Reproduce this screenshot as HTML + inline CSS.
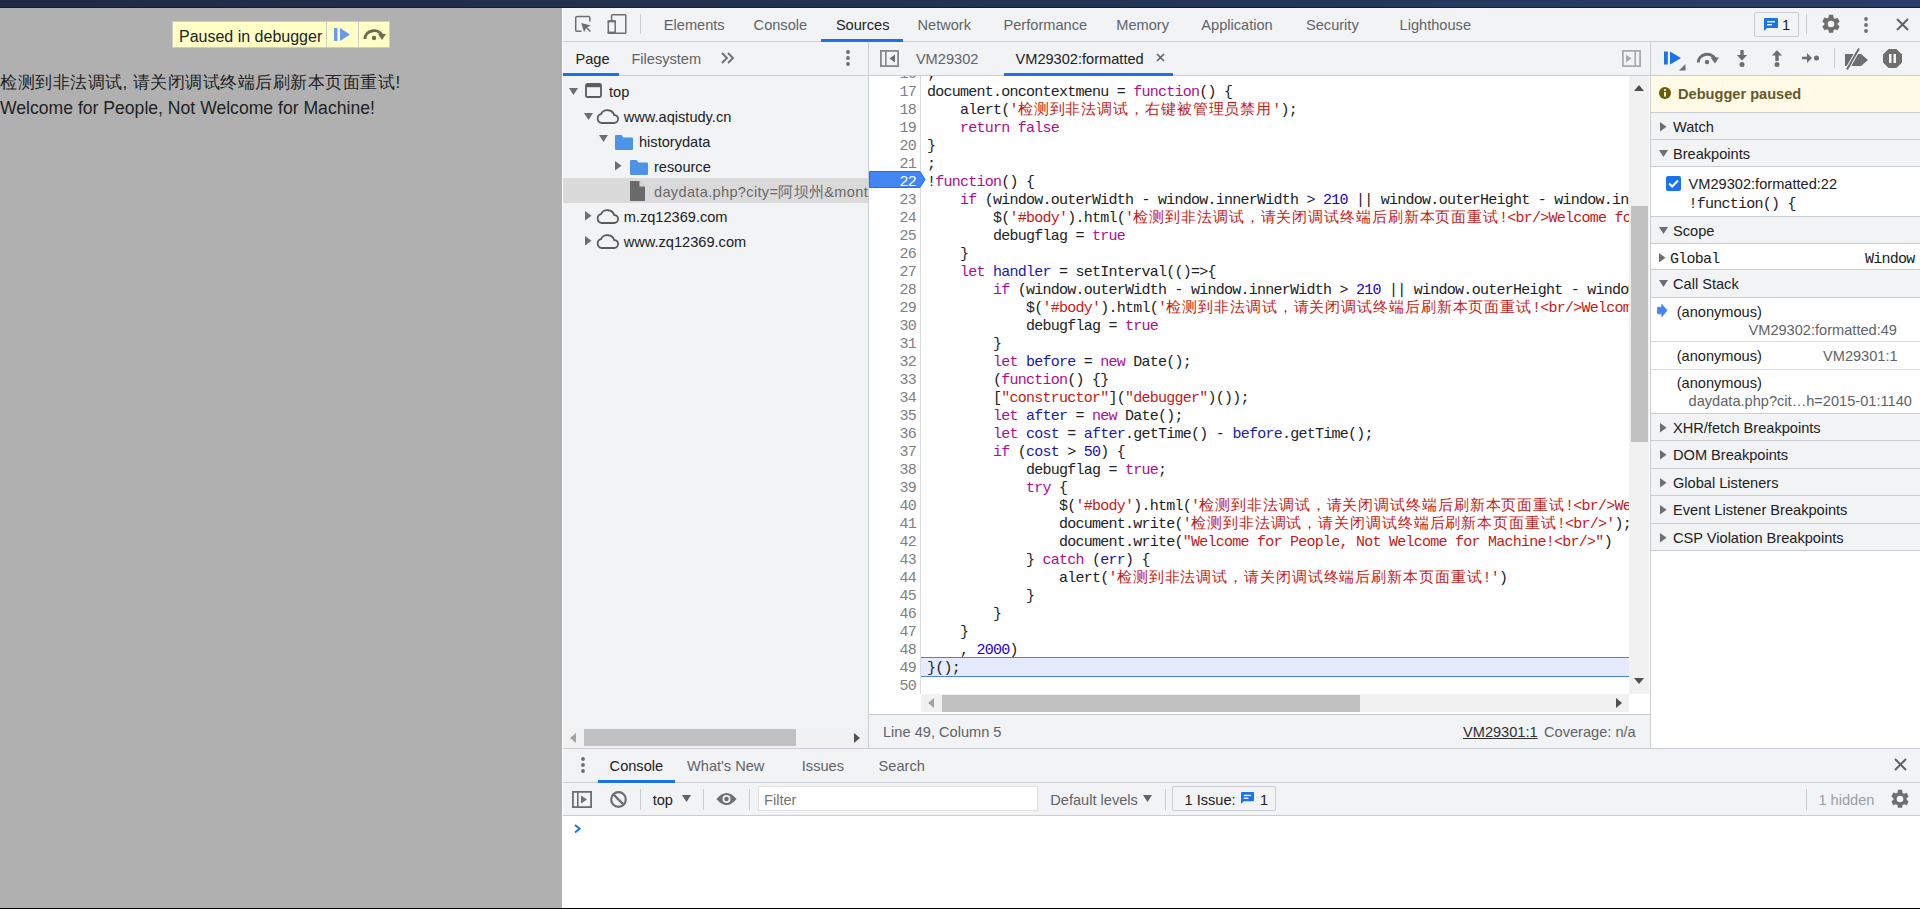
<!DOCTYPE html><html><head><meta charset="utf-8"><style>
*{margin:0;padding:0;box-sizing:border-box}
html,body{width:1920px;height:909px;overflow:hidden;background:#b0b0b0}
body{position:relative;font-family:"Liberation Sans",sans-serif;font-size:14.6px;color:#202124}
.a{position:absolute}
.t{position:absolute;white-space:pre;line-height:22px}
.bg{background:#f1f3f4}
.hl{position:absolute;background:#cacdd1}
.mono{font-family:"Liberation Mono",monospace}
svg{position:absolute;overflow:visible}
#code .ln{position:absolute;left:869px;width:47px;text-align:right;color:#808080;font-family:"Liberation Mono",monospace;font-size:15px;letter-spacing:-0.75px;height:18px;line-height:18px;white-space:pre}
#code .cl{position:absolute;left:927px;font-family:"Liberation Mono",monospace;font-size:15px;letter-spacing:-0.75px;height:18px;line-height:18px;white-space:pre;color:#202124}
.k{color:#aa0d91}.s{color:#c41a16}.d{color:#1a1aa6}.n{color:#1c00cf}
.c{letter-spacing:0.9px}
.sec{position:absolute;left:1651px;width:269px;background:#f1f3f4;border-bottom:1px solid #cacdd1}
.sec .t{left:22px}
</style></head><body><div class="a" style="left:0;top:0;width:1920px;height:8px;background:linear-gradient(90deg,#202a46,#233252 50%,#2b3d68)"></div><div class="a" style="left:0;top:7px;width:1920px;height:1px;background:#17183e"></div><div class="a" style="left:0;top:908px;width:1920px;height:1px;background:#000"></div><div class="t" style="left:0;top:71px;font-size:17px;letter-spacing:0.5px;line-height:24px;color:#222">检测到非法调试, 请关闭调试终端后刷新本页面重试!</div><div class="t" style="left:0;top:96px;font-size:17.6px;line-height:24px;color:#222">Welcome for People, Not Welcome for Machine!</div><div class="a" style="left:172px;top:21px;width:218px;height:27px;background:#ffffc6;border:1px solid #cbcbc8"></div><div class="a" style="left:326px;top:22px;width:1px;height:25px;background:#cbcbc8"></div><div class="a" style="left:358px;top:22px;width:1px;height:25px;background:#cbcbc8"></div><div class="t" style="left:179px;top:26px;font-size:16px;line-height:22px;color:#222">Paused in debugger</div><svg style="left:334px;top:28px" width="16" height="13" viewBox="0 0 16 13"><rect x="0" y="0" width="3.5" height="13" fill="#6a9be9"/><path d="M6 0 L16 6.5 L6 13Z" fill="#6a9be9"/></svg><svg style="left:363px;top:28px" width="23" height="13" viewBox="0 0 23 13"><path d="M2 11 A9 8 0 0 1 19 7" fill="none" stroke="#6b6b55" stroke-width="3"/><path d="M15 6 L23 6 L19 12Z" fill="#6b6b55"/><circle cx="11" cy="10" r="2.2" fill="#6b6b55"/></svg><div class="a" style="left:562px;top:8px;width:1358px;height:900px;background:#fff"></div><div class="a" style="left:562px;top:8px;width:1px;height:900px;background:#ffffff"></div><div class="a bg" style="left:563px;top:8px;width:1357px;height:33px"></div><div class="hl" style="left:563px;top:41px;width:1357px;height:1px"></div><div class="t" style="left:663.8px;top:14px;color:#5f6368">Elements</div><div class="t" style="left:753.6px;top:14px;color:#5f6368">Console</div><div class="t" style="left:835.9px;top:14px;color:#202124">Sources</div><div class="t" style="left:917.5px;top:14px;color:#5f6368">Network</div><div class="t" style="left:1003.5px;top:14px;color:#5f6368">Performance</div><div class="t" style="left:1116.3px;top:14px;color:#5f6368">Memory</div><div class="t" style="left:1201.3px;top:14px;color:#5f6368">Application</div><div class="t" style="left:1306px;top:14px;color:#5f6368">Security</div><div class="t" style="left:1399.6px;top:14px;color:#5f6368">Lighthouse</div><div class="a" style="left:821px;top:39px;width:82px;height:3px;background:#1a73e8"></div><svg style="left:575px;top:16px" width="17" height="17" viewBox="0 0 17 17"><path d="M6.5 15.2 H2 Q0.7 15.2 0.7 13.9 V1.9 Q0.7 0.6 2 0.6 H13.5 Q14.8 0.6 14.8 1.9 V5.5" fill="none" stroke="#6e6e6e" stroke-width="1.5"/><path d="M6.2 6.9 L15.8 9.6 L12.2 11.2 L16 14.9 L14.9 16 L11.1 12.3 L9 16Z" fill="#6e6e6e"/></svg><svg style="left:607px;top:14px" width="20" height="20" viewBox="0 0 20 20"><path d="M4.6 6.5 V1.5 Q4.6 0.7 5.4 0.7 H18 Q18.8 0.7 18.8 1.5 V18.5 Q18.8 19.3 18 19.3 H8.5" fill="none" stroke="#6e6e6e" stroke-width="1.5"/><rect x="1.3" y="7" width="6.9" height="12.2" rx="0.8" fill="none" stroke="#6e6e6e" stroke-width="1.5"/><rect x="0.6" y="17.6" width="8.3" height="2.1" fill="#6e6e6e"/><rect x="0.6" y="6.3" width="8.3" height="2" fill="#6e6e6e"/></svg><div class="a" style="left:640px;top:14px;width:1px;height:20px;background:#cacdd1"></div><div class="a" style="left:1754px;top:12px;width:45px;height:25px;border:1px solid #cacdd1;border-radius:2px"></div><svg style="left:1764px;top:18px" width="14" height="14" viewBox="0 0 14 14"><path d="M0 1 Q0 0 1 0 H13 Q14 0 14 1 V9 Q14 10 13 10 H3 L0 13Z" fill="#1a73e8"/><rect x="3" y="3" width="8" height="1.4" fill="#fff"/><rect x="3" y="6" width="5" height="1.4" fill="#fff"/></svg><div class="t" style="left:1782px;top:14px;color:#202124">1</div><div class="a" style="left:1806px;top:14px;width:1px;height:20px;background:#cacdd1"></div><svg style="left:1820px;top:13px" width="22" height="22" viewBox="0 0 24 24"><path fill="#6e6e6e" d="M19.14 12.94c.04-.3.06-.61.06-.94 0-.32-.02-.64-.07-.94l2.03-1.58a.49.49 0 0 0 .12-.61l-1.92-3.32a.49.49 0 0 0-.59-.22l-2.39.96c-.5-.38-1.03-.7-1.62-.94l-.36-2.54A.48.48 0 0 0 13.92 2h-3.84c-.24 0-.43.17-.47.41l-.36 2.54c-.59.24-1.13.57-1.62.94l-2.39-.96a.48.48 0 0 0-.59.22L2.74 8.87a.47.47 0 0 0 .12.61l2.03 1.58c-.05.3-.09.63-.09.94s.02.64.07.94l-2.03 1.58a.49.49 0 0 0-.12.61l1.92 3.32c.12.22.37.29.59.22l2.39-.96c.5.38 1.03.7 1.62.94l.36 2.54c.05.24.24.41.48.41h3.84c.24 0 .44-.17.47-.41l.36-2.54c.59-.24 1.13-.56 1.62-.94l2.39.96c.22.08.47 0 .59-.22l1.92-3.32a.47.47 0 0 0-.12-.61l-2.01-1.58zM12 15.6A3.6 3.6 0 1 1 12 8.4a3.6 3.6 0 0 1 0 7.2z"/></svg><svg style="left:1863px;top:17px" width="6" height="16" viewBox="0 0 6 16"><circle cx="3" cy="2" r="1.9" fill="#6e6e6e"/><circle cx="3" cy="8" r="1.9" fill="#6e6e6e"/><circle cx="3" cy="14" r="1.9" fill="#6e6e6e"/></svg><svg style="left:1896px;top:18px" width="13" height="13" viewBox="0 0 13 13"><path d="M1 1 L12 12 M12 1 L1 12" stroke="#5f6368" stroke-width="2"/></svg><div class="a bg" style="left:563px;top:42px;width:1357px;height:33px"></div><div class="hl" style="left:563px;top:75px;width:1357px;height:1px"></div><div class="t" style="left:575.5px;top:48px;color:#202124">Page</div><div class="t" style="left:631.4px;top:48px;color:#5f6368">Filesystem</div><div class="a" style="left:563px;top:73px;width:56px;height:3px;background:#1a73e8"></div><svg style="left:721px;top:52px" width="13" height="12" viewBox="0 0 13 12"><path d="M1 1 L6 6 L1 11 M7 1 L12 6 L7 11" fill="none" stroke="#6e6e6e" stroke-width="1.8"/></svg><svg style="left:845px;top:50px" width="6" height="16" viewBox="0 0 6 16"><circle cx="3" cy="2" r="1.9" fill="#6e6e6e"/><circle cx="3" cy="8" r="1.9" fill="#6e6e6e"/><circle cx="3" cy="14" r="1.9" fill="#6e6e6e"/></svg><div class="hl" style="left:868px;top:42px;width:1px;height:706px"></div><div class="hl" style="left:1650px;top:42px;width:1px;height:706px"></div><svg style="left:880px;top:50px" width="19" height="17" viewBox="0 0 19 17"><rect x="0.9" y="0.9" width="17.2" height="15.2" fill="none" stroke="#888" stroke-width="1.8"/><rect x="5" y="1" width="1.6" height="15" fill="#888"/><path d="M15 4.5 L9.5 8.5 L15 12.5Z" fill="#6e6e6e"/></svg><div class="t" style="left:915.9px;top:48px;color:#5f6368">VM29302</div><div class="t" style="left:1015.5px;top:48px;color:#202124">VM29302:formatted</div><svg style="left:1156px;top:53px" width="9" height="9" viewBox="0 0 9 9"><path d="M1 1 L8 8 M8 1 L1 8" stroke="#5f6368" stroke-width="1.6"/></svg><div class="a" style="left:1004px;top:73px;width:169px;height:3px;background:#1a73e8"></div><svg style="left:1622px;top:50px" width="19" height="17" viewBox="0 0 19 17"><rect x="0.9" y="0.9" width="17.2" height="15.2" fill="none" stroke="#aaa" stroke-width="1.8"/><rect x="12.4" y="1" width="1.6" height="15" fill="#aaa"/><path d="M4 4.5 L9.5 8.5 L4 12.5Z" fill="#aaa"/></svg><svg style="left:1664px;top:51px" width="24" height="20" viewBox="0 0 24 20"><rect x="0" y="0.5" width="3.8" height="13" fill="#1a73e8"/><path d="M6 0.5 L17 7 L6 13.5Z" fill="#1a73e8"/><path d="M21.5 13 V19.5 H15Z" fill="#6e6e6e"/></svg><svg style="left:1696px;top:51px" width="23" height="14" viewBox="0 0 23 14"><path d="M2.2 11.5 A9 8.5 0 0 1 19 7.5" fill="none" stroke="#6e6e6e" stroke-width="3"/><path d="M14.5 6.5 L23 6.5 L19 12.5Z" fill="#6e6e6e"/><circle cx="11" cy="11" r="2.2" fill="#6e6e6e"/></svg><svg style="left:1737px;top:50px" width="10" height="18" viewBox="0 0 10 18"><rect x="3.3" y="0" width="3.4" height="6" fill="#6e6e6e"/><path d="M-0.2 5 H10.2 L5 10.5Z" fill="#6e6e6e"/><circle cx="5" cy="14.5" r="2.5" fill="#6e6e6e"/></svg><svg style="left:1772px;top:50px" width="10" height="18" viewBox="0 0 10 18"><path d="M-0.2 5.5 H10.2 L5 0.3Z" fill="#6e6e6e"/><rect x="3.3" y="5" width="3.4" height="6" fill="#6e6e6e"/><circle cx="5" cy="14.5" r="2.5" fill="#6e6e6e"/></svg><svg style="left:1802px;top:53px" width="18" height="10" viewBox="0 0 18 10"><rect x="0" y="3.7" width="6" height="2.6" fill="#6e6e6e"/><path d="M5 0 V10 L10 5Z" fill="#6e6e6e"/><circle cx="14.5" cy="5" r="2.5" fill="#6e6e6e"/></svg><div class="a" style="left:1834px;top:48px;width:1px;height:20px;background:#cacdd1"></div><svg style="left:1844px;top:48px" width="25" height="22" viewBox="0 0 25 22"><path d="M1 6 H17 L24 12 L17 18 H1Z" fill="#6e6e6e"/><path d="M3 21.5 L15 0.5" stroke="#f1f3f4" stroke-width="4"/><path d="M3 21.5 L15 0.5" stroke="#6e6e6e" stroke-width="2"/></svg><svg style="left:1883px;top:49px" width="19" height="19" viewBox="0 0 19 19"><path d="M5.6 0 H13.4 L19 5.6 V13.4 L13.4 19 H5.6 L0 13.4 V5.6Z" fill="#6e6e6e"/><rect x="6" y="5" width="2.5" height="9" fill="#f1f3f4"/><rect x="10.5" y="5" width="2.5" height="9" fill="#f1f3f4"/></svg><div class="a" style="left:563px;top:76px;width:305px;height:672px;background:#f1f3f4"></div><div class="a" style="left:563px;top:178px;width:305px;height:25px;background:#dadada"></div><svg style="left:569px;top:88px" width="9" height="7" viewBox="0 0 9 7"><path d="M0 0 H9 L4.5 7Z" fill="#6e6e6e"/></svg><svg style="left:585px;top:83px" width="17" height="15" viewBox="0 0 17 15"><rect x="1" y="1" width="15" height="13" rx="1.5" fill="none" stroke="#5c5c5c" stroke-width="1.8"/><rect x="1" y="1" width="15" height="3.2" fill="#5c5c5c"/></svg><div class="t" style="left:609px;top:81px">top</div><svg style="left:584px;top:113px" width="9" height="7" viewBox="0 0 9 7"><path d="M0 0 H9 L4.5 7Z" fill="#6e6e6e"/></svg><svg style="left:596px;top:108.5px" width="23" height="15" viewBox="0 0 23 15"><path d="M5.5 14 H18 A4 4 0 0 0 18.2 6 A7 6.5 0 0 0 5 5.2 A4.5 4.5 0 0 0 5.5 14Z" fill="none" stroke="#5c5c5c" stroke-width="1.8"/></svg><div class="t" style="left:623.7px;top:106px">www.aqistudy.cn</div><svg style="left:599px;top:135px" width="9" height="7" viewBox="0 0 9 7"><path d="M0 0 H9 L4.5 7Z" fill="#6e6e6e"/></svg><svg style="left:615px;top:135px" width="18" height="15" viewBox="0 0 18 15"><path d="M0 1 Q0 0 1 0 H6.5 L8.5 2.5 H17 Q18 2.5 18 3.5 V14 Q18 15 17 15 H1 Q0 15 0 14Z" fill="#4d94e8"/></svg><div class="t" style="left:639px;top:131px">historydata</div><svg style="left:615px;top:161px" width="7" height="10" viewBox="0 0 7 10"><path d="M0 0 V9.6 L6.5 4.8Z" fill="#6e6e6e"/></svg><svg style="left:630px;top:160px" width="18" height="15" viewBox="0 0 18 15"><path d="M0 1 Q0 0 1 0 H6.5 L8.5 2.5 H17 Q18 2.5 18 3.5 V14 Q18 15 17 15 H1 Q0 15 0 14Z" fill="#4d94e8"/></svg><div class="t" style="left:654px;top:156px">resource</div><svg style="left:630px;top:181px" width="15" height="20" viewBox="0 0 15 20"><path d="M0 0 H9.5 L15 5.5 V20 H0Z" fill="#6a6a6a"/><path d="M9.5 0 V5.5 H15Z" fill="#dadada"/></svg><div class="t" style="left:654px;top:181px;color:#6a6a6a;width:214px;overflow:hidden;letter-spacing:0.32px">daydata.php?city=阿坝州&amp;month=2015-01</div><svg style="left:585px;top:211px" width="7" height="10" viewBox="0 0 7 10"><path d="M0 0 V9.6 L6.5 4.8Z" fill="#6e6e6e"/></svg><svg style="left:596px;top:208.5px" width="23" height="15" viewBox="0 0 23 15"><path d="M5.5 14 H18 A4 4 0 0 0 18.2 6 A7 6.5 0 0 0 5 5.2 A4.5 4.5 0 0 0 5.5 14Z" fill="none" stroke="#5c5c5c" stroke-width="1.8"/></svg><div class="t" style="left:623.7px;top:206px">m.zq12369.com</div><svg style="left:585px;top:236px" width="7" height="10" viewBox="0 0 7 10"><path d="M0 0 V9.6 L6.5 4.8Z" fill="#6e6e6e"/></svg><svg style="left:596px;top:233.5px" width="23" height="15" viewBox="0 0 23 15"><path d="M5.5 14 H18 A4 4 0 0 0 18.2 6 A7 6.5 0 0 0 5 5.2 A4.5 4.5 0 0 0 5.5 14Z" fill="none" stroke="#5c5c5c" stroke-width="1.8"/></svg><div class="t" style="left:623.7px;top:231px">www.zq12369.com</div><div class="a" style="left:563px;top:728px;width:305px;height:19px;background:#f1f1f1"></div><div class="a" style="left:584px;top:729px;width:212px;height:17px;background:#c1c1c1"></div><svg style="left:570px;top:733px" width="6" height="10" viewBox="0 0 6 10"><path d="M6 0 V10 L0 5Z" fill="#a3a3a3"/></svg><svg style="left:854px;top:733px" width="6" height="10" viewBox="0 0 6 10"><path d="M0 0 V10 L6 5Z" fill="#505050"/></svg><div class="a" style="left:869px;top:76px;width:781px;height:639px;background:#fff"></div><div id="code" class="a" style="left:0;top:0;width:1920px;height:909px;clip-path:inset(76px 271px 215px 869px)"><div class="a" style="left:920px;top:76px;width:1px;height:636px;background:#dadce0"></div><div class="a" style="left:921px;top:657px;width:708px;height:20px;background:#e5ebfd;border-top:1px solid #4d7fe8;border-bottom:1px solid #4d7fe8"></div><svg style="left:869px;top:171px" width="57" height="18" viewBox="0 0 57 18"><path d="M0.5 0.5 H51 L56 8.5 L51 16.5 H0.5Z" fill="#4285f4" stroke="#1a73e8" stroke-width="1"/></svg><div class="ln" style="top:66px;">16</div><div class="cl" style="top:66px">;</div><div class="ln" style="top:84px;">17</div><div class="cl" style="top:84px">document.oncontextmenu = <span class="k">function</span>() {</div><div class="ln" style="top:102px;">18</div><div class="cl" style="top:102px">    alert(<span class="s">'<i class="c" style="font-style:normal">检测到非法调试，右键被管理员禁用</i>'</span>);</div><div class="ln" style="top:120px;">19</div><div class="cl" style="top:120px">    <span class="k">return</span> <span class="k">false</span></div><div class="ln" style="top:138px;">20</div><div class="cl" style="top:138px">}</div><div class="ln" style="top:156px;">21</div><div class="cl" style="top:156px">;</div><div class="ln" style="top:174px;color:#fff;">22</div><div class="cl" style="top:174px">!<span class="k">function</span>() {</div><div class="ln" style="top:192px;">23</div><div class="cl" style="top:192px">    <span class="k">if</span> (window.outerWidth - window.innerWidth &gt; <span class="n">210</span> || window.outerHeight - window.innerHeight &gt; <span class="n">210</span>) {</div><div class="ln" style="top:210px;">24</div><div class="cl" style="top:210px">        $(<span class="s">'#body'</span>).html(<span class="s">'<i class="c" style="font-style:normal">检测到非法调试，请关闭调试终端后刷新本页面重试</i>!&lt;br/&gt;Welcome for People, Not Welcome for Machine!'</span>);</div><div class="ln" style="top:228px;">25</div><div class="cl" style="top:228px">        debugflag = <span class="k">true</span></div><div class="ln" style="top:246px;">26</div><div class="cl" style="top:246px">    }</div><div class="ln" style="top:264px;">27</div><div class="cl" style="top:264px">    <span class="k">let</span> <span class="d">handler</span> = setInterval(()=&gt;{</div><div class="ln" style="top:282px;">28</div><div class="cl" style="top:282px">        <span class="k">if</span> (window.outerWidth - window.innerWidth &gt; <span class="n">210</span> || window.outerHeight - window.innerHeight &gt; <span class="n">210</span>) {</div><div class="ln" style="top:300px;">29</div><div class="cl" style="top:300px">            $(<span class="s">'#body'</span>).html(<span class="s">'<i class="c" style="font-style:normal">检测到非法调试，请关闭调试终端后刷新本页面重试</i>!&lt;br/&gt;Welcome for People, Not Welcome for Machine!'</span>);</div><div class="ln" style="top:318px;">30</div><div class="cl" style="top:318px">            debugflag = <span class="k">true</span></div><div class="ln" style="top:336px;">31</div><div class="cl" style="top:336px">        }</div><div class="ln" style="top:354px;">32</div><div class="cl" style="top:354px">        <span class="k">let</span> <span class="d">before</span> = <span class="k">new</span> Date();</div><div class="ln" style="top:372px;">33</div><div class="cl" style="top:372px">        (<span class="k">function</span>() {}</div><div class="ln" style="top:390px;">34</div><div class="cl" style="top:390px">        [<span class="s">"constructor"</span>](<span class="s">"debugger"</span>)());</div><div class="ln" style="top:408px;">35</div><div class="cl" style="top:408px">        <span class="k">let</span> <span class="d">after</span> = <span class="k">new</span> Date();</div><div class="ln" style="top:426px;">36</div><div class="cl" style="top:426px">        <span class="k">let</span> <span class="d">cost</span> = <span class="d">after</span>.getTime() - <span class="d">before</span>.getTime();</div><div class="ln" style="top:444px;">37</div><div class="cl" style="top:444px">        <span class="k">if</span> (<span class="d">cost</span> &gt; <span class="n">50</span>) {</div><div class="ln" style="top:462px;">38</div><div class="cl" style="top:462px">            debugflag = <span class="k">true</span>;</div><div class="ln" style="top:480px;">39</div><div class="cl" style="top:480px">            <span class="k">try</span> {</div><div class="ln" style="top:498px;">40</div><div class="cl" style="top:498px">                $(<span class="s">'#body'</span>).html(<span class="s">'<i class="c" style="font-style:normal">检测到非法调试，请关闭调试终端后刷新本页面重试</i>!&lt;br/&gt;Welcome for People, Not Welcome for Machine!'</span>);</div><div class="ln" style="top:516px;">41</div><div class="cl" style="top:516px">                document.write(<span class="s">'<i class="c" style="font-style:normal">检测到非法调试，请关闭调试终端后刷新本页面重试</i>!&lt;br/&gt;'</span>);</div><div class="ln" style="top:534px;">42</div><div class="cl" style="top:534px">                document.write(<span class="s">"Welcome for People, Not Welcome for Machine!&lt;br/&gt;"</span>)</div><div class="ln" style="top:552px;">43</div><div class="cl" style="top:552px">            } <span class="k">catch</span> (<span class="d">err</span>) {</div><div class="ln" style="top:570px;">44</div><div class="cl" style="top:570px">                alert(<span class="s">'<i class="c" style="font-style:normal">检测到非法调试，请关闭调试终端后刷新本页面重试</i>!'</span>)</div><div class="ln" style="top:588px;">45</div><div class="cl" style="top:588px">            }</div><div class="ln" style="top:606px;">46</div><div class="cl" style="top:606px">        }</div><div class="ln" style="top:624px;">47</div><div class="cl" style="top:624px">    }</div><div class="ln" style="top:642px;">48</div><div class="cl" style="top:642px">    , <span class="n">2000</span>)</div><div class="ln" style="top:660px;">49</div><div class="cl" style="top:660px">}();</div><div class="ln" style="top:678px;">50</div><div class="cl" style="top:678px"></div></div><div class="a" style="left:1629px;top:76px;width:20px;height:618px;background:#f1f1f1"></div><div class="a" style="left:1631px;top:206px;width:17px;height:236px;background:#c1c1c1"></div><svg style="left:1634px;top:85px" width="10" height="6" viewBox="0 0 10 6"><path d="M0 6 H10 L5 0Z" fill="#505050"/></svg><svg style="left:1634px;top:678px" width="10" height="6" viewBox="0 0 10 6"><path d="M0 0 H10 L5 6Z" fill="#505050"/></svg><div class="a" style="left:921px;top:694px;width:708px;height:18px;background:#f1f1f1"></div><div class="a" style="left:942px;top:695px;width:418px;height:17px;background:#c1c1c1"></div><svg style="left:928px;top:698px" width="6" height="10" viewBox="0 0 6 10"><path d="M6 0 V10 L0 5Z" fill="#a3a3a3"/></svg><svg style="left:1616px;top:698px" width="6" height="10" viewBox="0 0 6 10"><path d="M0 0 V10 L6 5Z" fill="#505050"/></svg><div class="a bg" style="left:869px;top:714px;width:781px;height:34px;border-top:1px solid #cacdd1"></div><div class="t" style="left:883px;top:721px;color:#5f6368">Line 49, Column 5</div><div class="t" style="left:1463px;top:721px;color:#303030;text-decoration:underline">VM29301:1</div><div class="t" style="left:1544px;top:721px;color:#5f6368">Coverage: n/a</div><div class="a" style="left:1651px;top:76px;width:269px;height:672px;background:#fff"></div><div class="a" style="left:1651px;top:76px;width:269px;height:37px;background:#fffbe6;border-bottom:1px solid #cacdd1"></div><svg style="left:1659px;top:87px" width="12" height="12" viewBox="0 0 12 12"><circle cx="6" cy="6" r="6" fill="#6a5c08"/><rect x="5.1" y="5" width="1.8" height="4.6" fill="#fffbe6"/><circle cx="6" cy="3" r="1.1" fill="#fffbe6"/></svg><div class="t" style="left:1678px;top:83px;font-weight:bold;color:#66582a">Debugger paused</div><div class="sec" style="top:113px;height:27px"></div><svg style="left:1660px;top:122px" width="7" height="10" viewBox="0 0 7 10"><path d="M0 0 V9.6 L6.5 4.8Z" fill="#6e6e6e"/></svg><div class="t" style="left:1673px;top:116px;color:#202124">Watch</div><div class="sec" style="top:140px;height:27px"></div><svg style="left:1659px;top:150px" width="9" height="7" viewBox="0 0 9 7"><path d="M0 0 H9 L4.5 7Z" fill="#6e6e6e"/></svg><div class="t" style="left:1673px;top:143px;color:#202124">Breakpoints</div><svg style="left:1666px;top:176px" width="15" height="15" viewBox="0 0 15 15"><rect width="15" height="15" rx="2" fill="#1a73e8"/><path d="M3.2 7.5 L6.2 10.5 L12 4.5" fill="none" stroke="#fff" stroke-width="2"/></svg><div class="t" style="left:1688.6px;top:173px">VM29302:formatted:22</div><div class="t mono" style="left:1688.6px;top:194px;font-size:15px;letter-spacing:-0.75px">!function() {</div><div class="sec" style="top:217px;height:27px"></div><svg style="left:1659px;top:227px" width="9" height="7" viewBox="0 0 9 7"><path d="M0 0 H9 L4.5 7Z" fill="#6e6e6e"/></svg><div class="t" style="left:1673px;top:220px;color:#202124">Scope</div><svg style="left:1659px;top:253px" width="7" height="10" viewBox="0 0 7 10"><path d="M0 0 V9.6 L6.5 4.8Z" fill="#6e6e6e"/></svg><div class="t mono" style="left:1670px;top:249px;font-size:15px;letter-spacing:-0.75px;color:#202124">Global</div><div class="t mono" style="left:1865px;top:249px;font-size:15px;letter-spacing:-0.75px;color:#202124">Window</div><div class="sec" style="top:270px;height:28px"></div><svg style="left:1659px;top:280px" width="9" height="7" viewBox="0 0 9 7"><path d="M0 0 H9 L4.5 7Z" fill="#6e6e6e"/></svg><div class="t" style="left:1673px;top:273px;color:#202124">Call Stack</div><svg style="left:1657px;top:304px" width="10" height="13" viewBox="0 0 10 13"><path d="M0.5 3.2 H4.8 V0.3 L10 6.5 L4.8 12.7 V9.8 H0.5Z" fill="#4285f4" stroke="#4285f4" stroke-width="0.8" stroke-linejoin="round"/></svg><div class="t" style="left:1676.7px;top:301px">(anonymous)</div><div class="t" style="left:1748.5px;top:319px;color:#5f6368">VM29302:formatted:49</div><div class="a" style="left:1651px;top:341px;width:269px;height:1px;background:#dadce0"></div><div class="t" style="left:1676.7px;top:345px">(anonymous)</div><div class="t" style="left:1823px;top:345px;color:#5f6368">VM29301:1</div><div class="a" style="left:1651px;top:369px;width:269px;height:1px;background:#dadce0"></div><div class="t" style="left:1676.7px;top:372px">(anonymous)</div><div class="t" style="left:1688.6px;top:390px;color:#5f6368">daydata.php?cit…h=2015-01:1140</div><div class="sec" style="top:414px;height:27px"></div><svg style="left:1660px;top:423px" width="7" height="10" viewBox="0 0 7 10"><path d="M0 0 V9.6 L6.5 4.8Z" fill="#6e6e6e"/></svg><div class="t" style="left:1673px;top:417px;color:#202124">XHR/fetch Breakpoints</div><div class="sec" style="top:441px;height:28px"></div><svg style="left:1660px;top:450px" width="7" height="10" viewBox="0 0 7 10"><path d="M0 0 V9.6 L6.5 4.8Z" fill="#6e6e6e"/></svg><div class="t" style="left:1673px;top:444px;color:#202124">DOM Breakpoints</div><div class="sec" style="top:469px;height:27px"></div><svg style="left:1660px;top:478px" width="7" height="10" viewBox="0 0 7 10"><path d="M0 0 V9.6 L6.5 4.8Z" fill="#6e6e6e"/></svg><div class="t" style="left:1673px;top:472px;color:#202124">Global Listeners</div><div class="sec" style="top:496px;height:28px"></div><svg style="left:1660px;top:505px" width="7" height="10" viewBox="0 0 7 10"><path d="M0 0 V9.6 L6.5 4.8Z" fill="#6e6e6e"/></svg><div class="t" style="left:1673px;top:499px;color:#202124">Event Listener Breakpoints</div><div class="sec" style="top:524px;height:27px"></div><svg style="left:1660px;top:533px" width="7" height="10" viewBox="0 0 7 10"><path d="M0 0 V9.6 L6.5 4.8Z" fill="#6e6e6e"/></svg><div class="t" style="left:1673px;top:527px;color:#202124">CSP Violation Breakpoints</div><div class="a" style="left:1651px;top:216px;width:269px;height:1px;background:#cacdd1"></div><div class="a" style="left:1651px;top:269px;width:269px;height:1px;background:#cacdd1"></div><div class="a" style="left:1651px;top:413px;width:269px;height:1px;background:#cacdd1"></div><div class="a bg" style="left:563px;top:748px;width:1357px;height:35px;border-top:1px solid #cacdd1;border-bottom:1px solid #cacdd1"></div><svg style="left:580px;top:757px" width="6" height="16" viewBox="0 0 6 16"><circle cx="3" cy="2" r="1.9" fill="#6e6e6e"/><circle cx="3" cy="8" r="1.9" fill="#6e6e6e"/><circle cx="3" cy="14" r="1.9" fill="#6e6e6e"/></svg><div class="t" style="left:609.6px;top:755px;color:#202124">Console</div><div class="a" style="left:598px;top:780px;width:77px;height:3px;background:#1a73e8"></div><div class="t" style="left:687px;top:755px;color:#5f6368">What's New</div><div class="t" style="left:801.8px;top:755px;color:#5f6368">Issues</div><div class="t" style="left:878.6px;top:755px;color:#5f6368">Search</div><svg style="left:1894px;top:758px" width="13" height="13" viewBox="0 0 13 13"><path d="M1 1 L12 12 M12 1 L1 12" stroke="#5f6368" stroke-width="2"/></svg><div class="a bg" style="left:563px;top:783px;width:1357px;height:33px;border-bottom:1px solid #cacdd1"></div><svg style="left:572px;top:791px" width="20" height="17" viewBox="0 0 20 17"><rect x="0.9" y="0.9" width="18.2" height="15.2" fill="none" stroke="#6e6e6e" stroke-width="1.8"/><rect x="5" y="1" width="1.6" height="15" fill="#6e6e6e"/><path d="M9 4.5 L15 8.5 L9 12.5Z" fill="#6e6e6e"/></svg><svg style="left:609.6px;top:791px" width="17" height="17" viewBox="0 0 17 17"><circle cx="8.5" cy="8.5" r="7.3" fill="none" stroke="#6e6e6e" stroke-width="2.2"/><path d="M3.4 3.4 L13.6 13.6" stroke="#6e6e6e" stroke-width="2.2"/></svg><div class="a" style="left:640px;top:789px;width:1px;height:21px;background:#cacdd1"></div><div class="t" style="left:652.7px;top:789px;color:#202124">top</div><svg style="left:682px;top:795px" width="9" height="7" viewBox="0 0 9 7"><path d="M0 0 H9 L4.5 7Z" fill="#5f6368"/></svg><div class="a" style="left:703px;top:789px;width:1px;height:21px;background:#cacdd1"></div><svg style="left:716px;top:792px" width="21" height="14" viewBox="0 0 21 14"><path d="M0.5 7 Q10.5 -5 20.5 7 Q10.5 19 0.5 7Z" fill="#6e6e6e"/><circle cx="10.5" cy="7" r="4" fill="#f1f3f4"/><circle cx="10.5" cy="7" r="2.3" fill="#6e6e6e"/></svg><div class="a" style="left:749px;top:789px;width:1px;height:21px;background:#cacdd1"></div><div class="a" style="left:758px;top:786px;width:280px;height:25px;background:#fff;border:1px solid #e0e0e0"></div><div class="t" style="left:764px;top:789px;color:#757575">Filter</div><div class="t" style="left:1050.3px;top:789px;color:#5f6368">Default levels</div><svg style="left:1143px;top:795px" width="9" height="7" viewBox="0 0 9 7"><path d="M0 0 H9 L4.5 7Z" fill="#5f6368"/></svg><div class="a" style="left:1165px;top:789px;width:1px;height:21px;background:#cacdd1"></div><div class="a" style="left:1172px;top:786px;width:104px;height:25px;border:1px solid #cacdd1;border-radius:2px"></div><div class="t" style="left:1184.5px;top:789px;color:#202124">1 Issue:</div><svg style="left:1241px;top:792px" width="13" height="13" viewBox="0 0 14 14"><path d="M0 1 Q0 0 1 0 H13 Q14 0 14 1 V9 Q14 10 13 10 H3 L0 13Z" fill="#1a73e8"/><rect x="3" y="3" width="8" height="1.4" fill="#fff"/><rect x="3" y="6" width="5" height="1.4" fill="#fff"/></svg><div class="t" style="left:1260px;top:789px;color:#202124">1</div><div class="a" style="left:1806px;top:789px;width:1px;height:21px;background:#cacdd1"></div><div class="t" style="left:1818.4px;top:789px;color:#9aa0a6">1 hidden</div><svg style="left:1889px;top:788px" width="22" height="22" viewBox="0 0 24 24"><path fill="#6e6e6e" d="M19.14 12.94c.04-.3.06-.61.06-.94 0-.32-.02-.64-.07-.94l2.03-1.58a.49.49 0 0 0 .12-.61l-1.92-3.32a.49.49 0 0 0-.59-.22l-2.39.96c-.5-.38-1.03-.7-1.62-.94l-.36-2.54A.48.48 0 0 0 13.92 2h-3.84c-.24 0-.43.17-.47.41l-.36 2.54c-.59.24-1.13.57-1.62.94l-2.39-.96a.48.48 0 0 0-.59.22L2.74 8.87a.47.47 0 0 0 .12.61l2.03 1.58c-.05.3-.09.63-.09.94s.02.64.07.94l-2.03 1.58a.49.49 0 0 0-.12.61l1.92 3.32c.12.22.37.29.59.22l2.39-.96c.5.38 1.03.7 1.62.94l.36 2.54c.05.24.24.41.48.41h3.84c.24 0 .44-.17.47-.41l.36-2.54c.59-.24 1.13-.56 1.62-.94l2.39.96c.22.08.47 0 .59-.22l1.92-3.32a.47.47 0 0 0-.12-.61l-2.01-1.58zM12 15.6A3.6 3.6 0 1 1 12 8.4a3.6 3.6 0 0 1 0 7.2z"/></svg><svg style="left:574px;top:824px" width="7" height="10" viewBox="0 0 7 10"><path d="M1 1 L5.6 4.8 L1 8.6" fill="none" stroke="#1a73e8" stroke-width="2"/></svg></body></html>
